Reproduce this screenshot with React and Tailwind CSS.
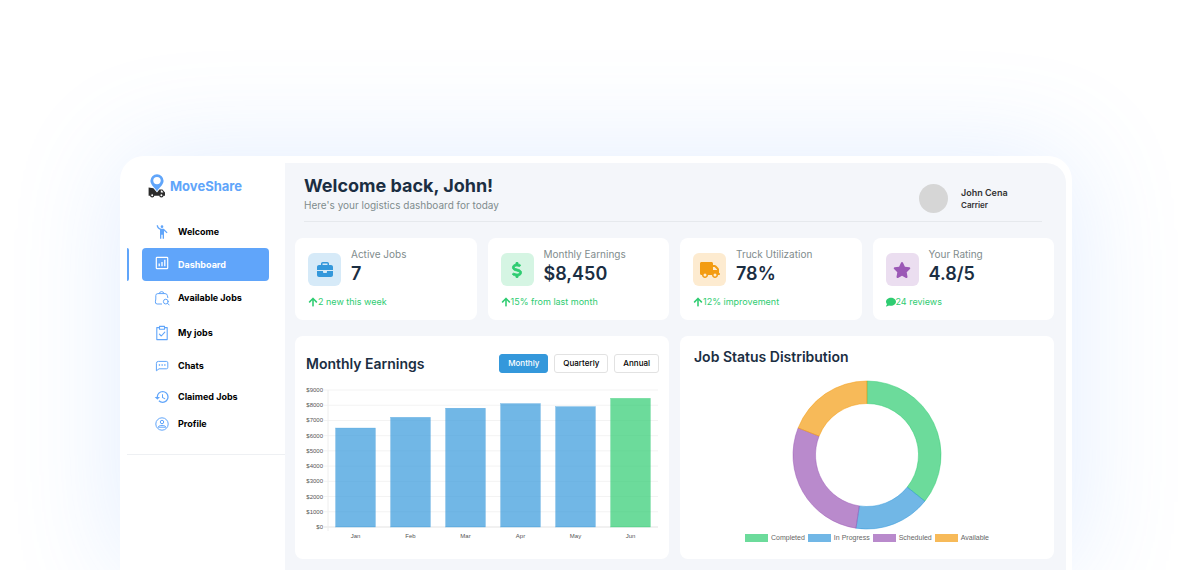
import { useState } from 'react';
import { FaBriefcase, FaComment, FaDollarSign, FaStar, FaTruck } from 'react-icons/fa6';
import { FaArrowUp } from 'react-icons/fa';
import { MdEmojiPeople, MdHistory } from 'react-icons/md';

const BLUE = '#3498db';
const GREEN = '#2ecc71';
const PURPLE = '#9b59b6';
const ORANGE = '#f39c12';

function DashboardIcon() {
  return (
    <svg viewBox="0 0 16 16" className="mb-1 size-4" fill="none" stroke="currentColor" strokeWidth="1.2" strokeLinejoin="round">
      <rect x="2.3" y="2.3" width="11.4" height="11.4" rx="0.8" />
      <path d="M5.2 11.2V8.6M8 11.2V7M10.8 11.2V4.8" strokeWidth="1.3" />
    </svg>
  );
}

function BagSearchIcon() {
  return (
    <svg viewBox="0 0 16 16" className="size-4" fill="none" stroke="currentColor" strokeWidth="1" strokeLinecap="round" strokeLinejoin="round">
      <path d="M7.6 14H3.2A1.9 1.9 0 0 1 1.4 11.8L1.8 9V5.6A2 2 0 0 1 3.8 3.6H11A2.4 2.4 0 0 1 13.4 5.6L13.8 7.6" />
      <path d="M5 3.6A2.7 2.7 0 0 1 10.2 3.6" />
      <circle cx="11.8" cy="11.6" r="2.4" />
      <path d="M13.6 13.4L15.2 15" />
    </svg>
  );
}

function ClipboardIcon() {
  return (
    <svg viewBox="0 0 16 16" className="size-4" fill="none" stroke="currentColor" strokeWidth="1.1" strokeLinecap="round" strokeLinejoin="round">
      <path d="M5.5 2.6H2.8V14.6H13.2V2.6H10.5" />
      <path d="M5.5 1.4H10.5V4.2H5.5Z" />
      <path d="M5.4 9.2L7.3 11L10.8 7.2" />
    </svg>
  );
}

function ChatIcon() {
  return (
    <svg viewBox="0 0 16 16" className="size-4" fill="none" stroke="currentColor" strokeWidth="1" strokeLinejoin="round">
      <path d="M4.4 3.4H12.4A1.4 1.4 0 0 1 13.8 4.8V9.4A1.4 1.4 0 0 1 12.4 10.8H5L2.4 12.8V5.4A2 2 0 0 1 4.4 3.4Z" />
      <path d="M4.8 7H6.1M7.5 7H8.8M10.2 7H11.5" strokeWidth="1.4" />
    </svg>
  );
}

function ProfileIcon() {
  return (
    <svg viewBox="0 0 16 16" className="size-4" fill="none" stroke="currentColor" strokeWidth="1">
      <circle cx="8" cy="8" r="6.2" />
      <circle cx="8" cy="6" r="1.7" />
      <path d="M4.2 11.2C4.6 8.8 11.4 8.8 11.8 11.2Z" />
    </svg>
  );
}

function Logo() {
  return (
    <svg viewBox="0 0 18 24" className="h-6 w-[18px]">
      <path d="M0.6 13.6L5.4 14.2L9 18.4L11.4 15.4H14.4L17 18.4V21.8H0.6Z" fill="#2b2b2b" />
      <path d="M9 0.2A6.6 6.6 0 0 0 2.4 6.8C2.4 10.8 7 13.8 9 17.4C11 13.8 15.6 10.8 15.6 6.8A6.6 6.6 0 0 0 9 0.2Z" fill="#60a5fa" />
      <circle cx="9" cy="6.6" r="3.7" fill="#fff" />
      <path d="M12.8 16.6H14L15.4 18.4H12.8Z" fill="#fff" />
      <circle cx="4.2" cy="21.2" r="1.6" fill="#fff" stroke="#2b2b2b" strokeWidth="1.2" />
      <circle cx="13.4" cy="21.2" r="1.6" fill="#fff" stroke="#2b2b2b" strokeWidth="1.2" />
    </svg>
  );
}

const navItems = [
  { label: 'Welcome', icon: <MdEmojiPeople className="size-4" />, height: 'h-8' },
  { label: 'Dashboard', icon: <DashboardIcon />, height: 'h-[33px]' },
  { label: 'Available Jobs', icon: <BagSearchIcon />, height: 'h-[34px]' },
  { label: 'My jobs', icon: <ClipboardIcon />, height: 'h-9' },
  { label: 'Chats', icon: <ChatIcon />, height: 'h-[30px]' },
  { label: 'Claimed Jobs', icon: <MdHistory className="size-4" />, height: 'h-[31px]' },
  { label: 'Profile', icon: <ProfileIcon />, height: 'h-[23px]' }
];

const stats = [
  { label: 'Active Jobs', value: '7', note: '2 new this week', icon: FaBriefcase, noteIcon: FaArrowUp, tile: 'bg-[#d6eaf8] text-[#3498db]' },
  { label: 'Monthly Earnings', value: '$8,450', note: '15% from last month', icon: FaDollarSign, noteIcon: FaArrowUp, tile: 'bg-[#d5f5e3] text-[#2ecc71]', iconClass: 'stroke-[30]' },
  { label: 'Truck Utilization', value: '78%', note: '12% improvement', icon: FaTruck, noteIcon: FaArrowUp, tile: 'bg-[#fdebd0] text-[#f39c12]' },
  { label: 'Your Rating', value: '4.8/5', note: '24 reviews', icon: FaStar, noteIcon: FaComment, tile: 'bg-[#ebdef0] text-[#9b59b6]' }
];

const earnings = [
  { month: 'Jan', value: 6500 },
  { month: 'Feb', value: 7200 },
  { month: 'Mar', value: 7800 },
  { month: 'Apr', value: 8100 },
  { month: 'May', value: 7900 },
  { month: 'Jun', value: 8450 }
];

const statuses = [
  { label: 'Completed', value: 15, color: GREEN, swatch: 'bg-[#2ecc71]/70' },
  { label: 'In Progress', value: 7, color: BLUE, swatch: 'bg-[#3498db]/70' },
  { label: 'Scheduled', value: 12, color: PURPLE, swatch: 'bg-[#9b59b6]/70' },
  { label: 'Available', value: 8, color: ORANGE, swatch: 'bg-[#f39c12]/70' }
];

function Sidebar({ active, onSelect }) {
  return (
    <aside className="w-[158px] shrink-0">
      <div className="flex items-center gap-1 pt-[11px] pl-[21px]">
        <Logo />
        <span className="text-[13px] leading-4 font-bold text-[#60a5fa]">MoveShare</span>
      </div>
      <nav className="mt-[18px] flex flex-col border-b border-[#eef0f3] pb-[19px]">
        {navItems.map((item) => {
          const isActive = item.label === active;
          return (
            <div key={item.label} className={`flex ${item.height}`}>
              <span className={`w-0.5 rounded-r-sm ${isActive ? 'bg-[#60a5fa]' : 'bg-transparent'}`} />
              <button
                type="button"
                onClick={() => onSelect(item.label)}
                className={`mr-4 ml-[13px] flex flex-1 items-center gap-2 rounded pl-3 text-[9px] leading-3 font-bold ${isActive ? 'bg-[#60a5fa] text-white' : 'text-black'}`}
              >
                <span className={isActive ? 'text-white' : 'text-[#60a5fa]'}>{item.icon}</span>
                {item.label}
              </button>
            </div>
          );
        })}
      </nav>
    </aside>
  );
}

function StatCard({ stat }) {
  const Icon = stat.icon;
  const NoteIcon = stat.noteIcon;

  return (
    <div className="rounded-lg bg-white px-[13px] pt-2.5 pb-3">
      <div className="flex items-center gap-2.5">
        <span className={`mt-1 flex size-[33px] items-center justify-center rounded-md ${stat.tile}`}>
          <Icon className={`h-4 w-5 ${stat.iconClass || ''}`} />
        </span>
        <div>
          <div className="text-[10px] leading-[13px] text-[#7f8c8d]">{stat.label}</div>
          <div className="text-[18px] leading-[26px] font-semibold text-[#1b2e42]">{stat.value}</div>
        </div>
      </div>
      <div className="mt-[9px] flex items-center text-[9px] leading-3 text-[#2ecc71]">
        <NoteIcon className="size-2.5" />
        {stat.note}
      </div>
    </div>
  );
}

function EarningsChart() {
  const left = 33;
  const right = 363;
  const bottom = 148;
  const top = 11;
  const step = (right - left) / earnings.length;
  const barWidth = step * 0.72;
  const toY = (value) => bottom - (value / 9000) * (bottom - top);
  const ticks = Array.from({ length: 10 }, (_, i) => i * 1000);

  return (
    <svg viewBox="0 0 374 170" className="block w-full font-['Liberation_Sans',sans-serif] text-[6px]" role="img" aria-label="Monthly earnings">
      {ticks.map((tick) => (
        <g key={tick}>
          <line x1={left - 4} x2={right} y1={toY(tick)} y2={toY(tick)} stroke={tick === 0 ? '#e3e3e3' : '#f3f3f3'} strokeWidth="1" />
          <text x="28" y={toY(tick) + 2} textAnchor="end" fill="#555">${tick}</text>
        </g>
      ))}
      <line x1={left} x2={left} y1={top} y2={bottom + 4} stroke="#eee" strokeWidth="1" />
      {earnings.map((item, i) => {
        const center = left + step * (i + 0.5);
        const color = i === earnings.length - 1 ? GREEN : BLUE;
        return (
          <g key={item.month}>
            <rect
              x={center - barWidth / 2}
              y={toY(item.value)}
              width={barWidth}
              height={bottom - toY(item.value)}
              fill={color}
              fillOpacity="0.7"
              stroke={color}
              strokeOpacity="0.6"
              strokeWidth="0.5"
            />
            <text x={center} y="159" textAnchor="middle" fill="#555">{item.month}</text>
          </g>
        );
      })}
    </svg>
  );
}

function StatusChart() {
  const total = statuses.reduce((sum, item) => sum + item.value, 0);
  const outer = 74;
  const inner = 51.5;
  const point = (radius, ratio) => {
    const angle = ratio * Math.PI * 2;
    return `${75 + radius * Math.sin(angle)} ${75 - radius * Math.cos(angle)}`;
  };

  let sum = 0;
  const slices = statuses.map((item) => {
    const start = sum / total;
    sum += item.value;
    const end = sum / total;
    return {
      ...item,
      path: `M${point(outer, start)}A${outer} ${outer} 0 0 1 ${point(outer, end)}L${point(inner, end)}A${inner} ${inner} 0 0 0 ${point(inner, start)}Z`
    };
  });

  return (
    <svg viewBox="0 0 150 150" className="size-[150px]" role="img" aria-label="Job status distribution">
      {slices.map((slice) => (
        <path key={slice.label} d={slice.path} fill={slice.color} fillOpacity="0.7" stroke={slice.color} strokeOpacity="0.7" strokeWidth="0.7" />
      ))}
    </svg>
  );
}

export default function App() {
  const [page, setPage] = useState('Dashboard');
  const [period, setPeriod] = useState('Monthly');

  return (
    <div className="flex min-h-screen flex-col overflow-hidden bg-white pt-[156px] pr-[123px] pl-[120px] font-['Inter',sans-serif]">
      <div className="flex flex-1 rounded-t-3xl bg-white pt-[7px] pr-1.5 pl-[7px] shadow-[0_0_110px_rgba(96,155,255,0.18)]">
        <Sidebar active={page} onSelect={setPage} />

        <main className="min-w-0 flex-1 rounded-tr-[20px] bg-[#f4f6fa] pr-3 pb-2.5 pl-2.5">
          <header className="mr-3 ml-[9px] flex items-center justify-between border-b border-[#e6e9ed] pt-3 pb-2">
            <div>
              <h1 className="text-[18px] leading-[22px] font-bold text-[#1b2e42]">Welcome back, John!</h1>
              <p className="text-[10px] leading-4 text-[#7f8c8d]">Here's your logistics dashboard for today</p>
            </div>
            <div className="flex w-[123px] items-center gap-[13px] pt-2">
              <span className="size-[29px] rounded-full bg-[#d6d6d6]" />
              <div className="font-semibold text-[#333]">
                <div className="text-[9px] leading-[13px]">John Cena</div>
                <div className="text-[8px] leading-3">Carrier</div>
              </div>
            </div>
          </header>

          {/* Stat cards */}
          <section className="mt-4 grid grid-cols-4 gap-[11px]">
            {stats.map((stat) => (
              <StatCard key={stat.label} stat={stat} />
            ))}
          </section>

          {/* Charts */}
          <section className="mt-4 grid grid-cols-2 gap-[11px]">
            <div className="rounded-lg bg-white pt-[18px] pb-2.5">
              <div className="mb-1.5 flex items-center justify-between pr-2.5 pl-[11px]">
                <h2 className="text-[14px] leading-4 font-semibold text-[#1b2e42]">Monthly Earnings</h2>
                <div className="flex gap-1.5">
                  {['Monthly', 'Quarterly', 'Annual'].map((name) => (
                    <button
                      key={name}
                      type="button"
                      onClick={() => setPeriod(name)}
                      className={`rounded-[3px] border px-2 py-0.5 text-[8px] leading-[13px] font-medium ${period === name ? 'border-[#3498db] bg-[#3498db] text-white' : 'border-[#e2e2e2] bg-white text-black'}`}
                    >
                      {name}
                    </button>
                  ))}
                </div>
              </div>
              <EarningsChart />
            </div>

            <div className="flex flex-col rounded-lg bg-white pt-3">
              <h2 className="pl-3.5 text-[14px] leading-[18px] font-semibold text-[#1b2e42]">Job Status Distribution</h2>
              <div className="mt-3.5 flex flex-col items-center">
                <StatusChart />
                <ul className="mt-1 flex gap-[3px] font-['Liberation_Sans',sans-serif] text-[7px] leading-2 text-[#666]">
                  {statuses.map((item) => (
                    <li key={item.label} className="flex items-center gap-[3px]">
                      <span className={`h-2 w-[23px] ${item.swatch}`} />
                      {item.label}
                    </li>
                  ))}
                </ul>
              </div>
            </div>
          </section>
        </main>
      </div>
    </div>
  );
}
